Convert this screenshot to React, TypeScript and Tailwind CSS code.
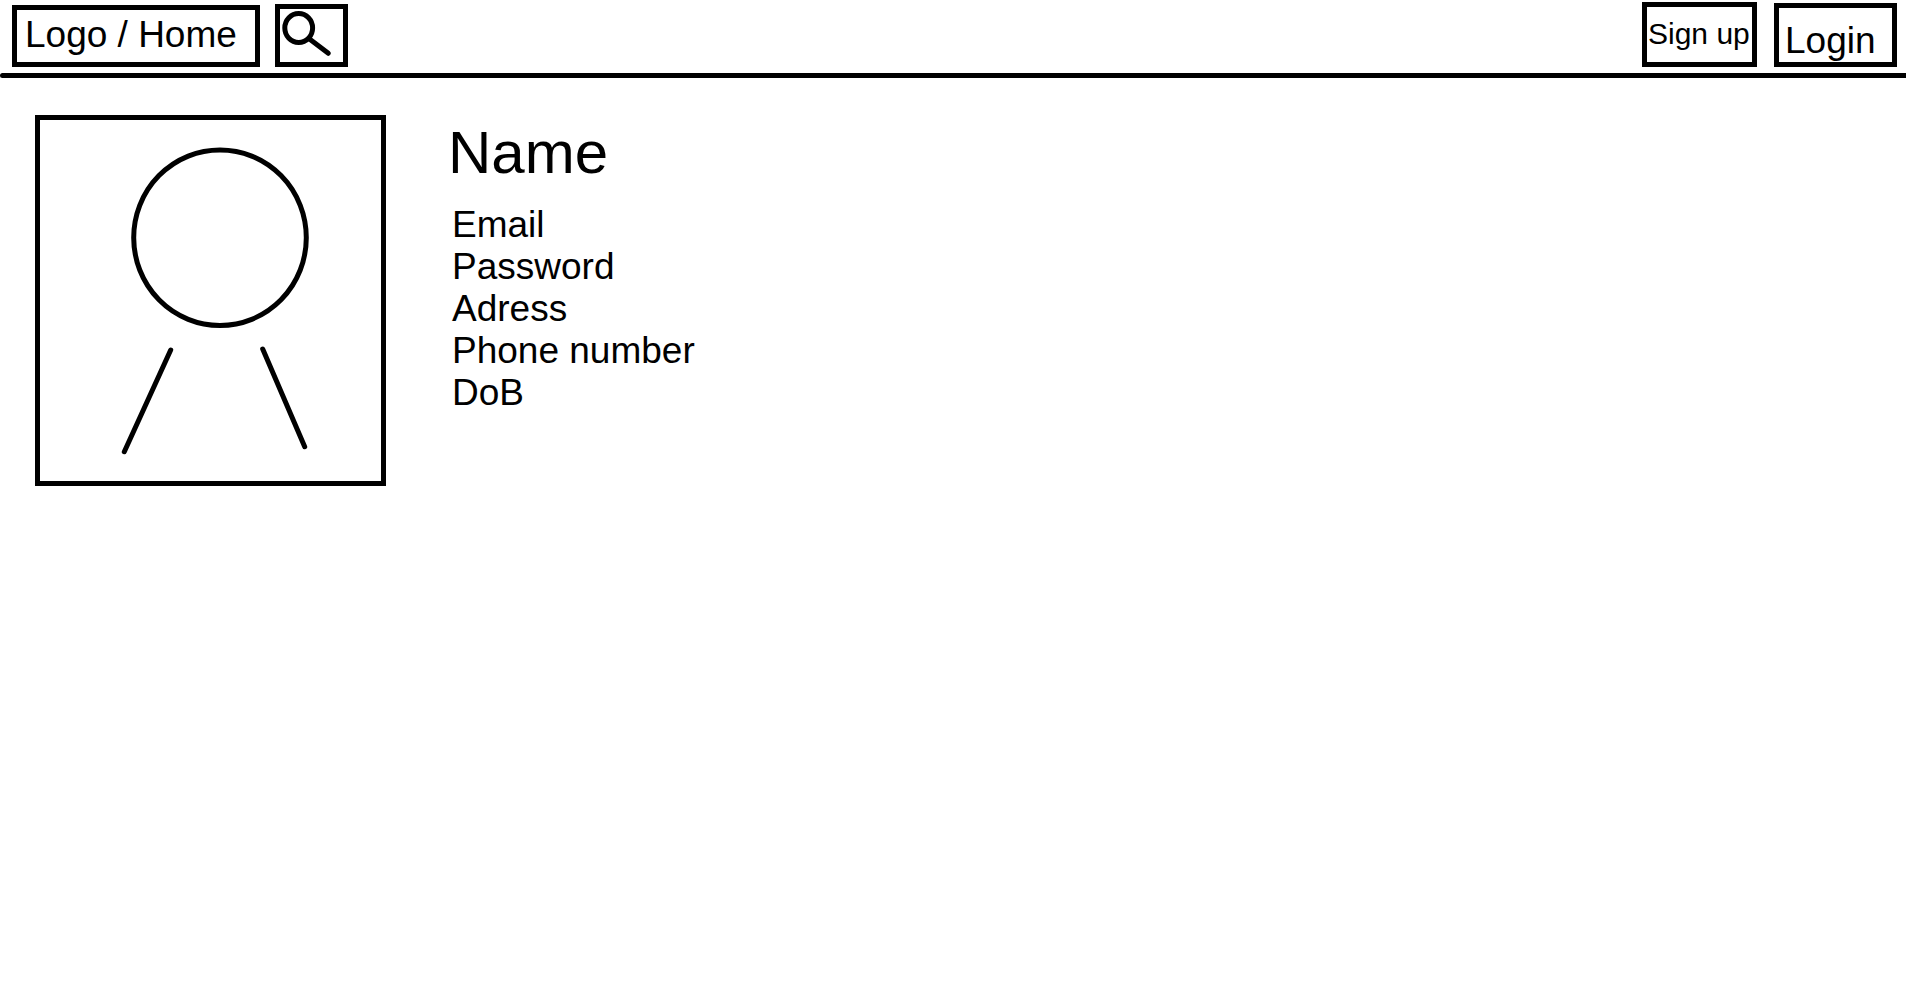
const details = ["Email", "Password", "Adress", "Phone number", "DoB"];

function SearchIcon() {
  return (
    <svg
      viewBox="0 0 63 53"
      className="block h-[53px] w-[63px]"
      fill="none"
      stroke="currentColor"
      strokeWidth="5"
      strokeLinecap="round"
      aria-hidden="true"
    >
      <ellipse cx="18.7" cy="19" rx="13.9" ry="14.5" />
      <path d="M29.5 30 48.3 44.3" />
    </svg>
  );
}

function Avatar() {
  return (
    <div className="shrink-0 border-5 border-black">
      <svg
        viewBox="0 0 341 361"
        className="block h-[361px] w-[341px]"
        fill="none"
        stroke="currentColor"
        strokeWidth="5"
        strokeLinecap="round"
        role="img"
        aria-label="Profile picture"
      >
        <ellipse cx="180" cy="117.7" rx="86.3" ry="87.8" />
        <path d="M130.7 230 84.3 331.7" />
        <path d="M222.7 229 264.7 326.7" />
      </svg>
    </div>
  );
}

export default function App() {
  return (
    <div className="min-h-screen bg-white font-['Liberation_Sans',Arial,sans-serif] text-[37px] leading-[42px] text-black">
      <header>
        <div className="flex items-end justify-between pt-0.5 pr-[9px] pb-1.5 pl-3">
          <nav className="flex items-end gap-[15px]">
            <a href="#" className="w-[248px] border-5 border-black pt-1 pb-1.5 pl-2 whitespace-nowrap">
              Logo / Home
            </a>
            <button type="button" aria-label="Search" className="border-5 border-black">
              <SearchIcon />
            </button>
          </nav>
          <div className="flex items-end gap-[17px]">
            <button
              type="button"
              className="w-[115px] border-5 border-black pt-[10px] pb-[11px] pl-px text-left text-[30px] leading-[34px] whitespace-nowrap"
            >
              Sign up
            </button>
            <button type="button" className="w-[123px] border-5 border-black pt-3 pl-1.5 text-left">
              Login
            </button>
          </div>
        </div>
        <div className="h-[5px] rounded-l-full bg-black" />
      </header>
      <main className="flex items-start gap-[62px] pt-[37px] pl-[35px]">
        <Avatar />
        <section className="pt-[3px]">
          <h1 className="text-[60px] leading-[70px]">Name</h1>
          <ul className="mt-4 pl-1">
            {details.map((detail) => (
              <li key={detail}>{detail}</li>
            ))}
          </ul>
        </section>
      </main>
    </div>
  );
}
